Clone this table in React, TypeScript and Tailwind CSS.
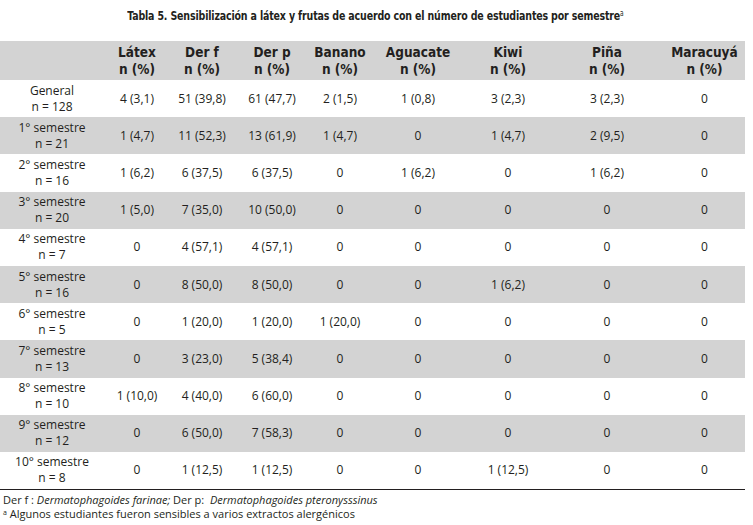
const rows = [
  { label: "General", n: "n = 128", vals: ["4 (3,1)", "51 (39,8)", "61 (47,7)", "2 (1,5)", "1 (0,8)", "3 (2,3)", "3 (2,3)", "0"] },
  { label: "1° semestre", n: "n = 21", vals: ["1 (4,7)", "11 (52,3)", "13 (61,9)", "1 (4,7)", "0", "1 (4,7)", "2 (9,5)", "0"] },
  { label: "2° semestre", n: "n = 16", vals: ["1 (6,2)", "6 (37,5)", "6 (37,5)", "0", "1 (6,2)", "0", "1 (6,2)", "0"] },
  { label: "3° semestre", n: "n = 20", vals: ["1 (5,0)", "7 (35,0)", "10 (50,0)", "0", "0", "0", "0", "0"] },
  { label: "4° semestre", n: "n = 7", vals: ["0", "4 (57,1)", "4 (57,1)", "0", "0", "0", "0", "0"] },
  { label: "5° semestre", n: "n = 16", vals: ["0", "8 (50,0)", "8 (50,0)", "0", "0", "1 (6,2)", "0", "0"] },
  { label: "6° semestre", n: "n = 5", vals: ["0", "1 (20,0)", "1 (20,0)", "1 (20,0)", "0", "0", "0", "0"] },
  { label: "7° semestre", n: "n = 13", vals: ["0", "3 (23,0)", "5 (38,4)", "0", "0", "0", "0", "0"] },
  { label: "8° semestre", n: "n = 10", vals: ["1 (10,0)", "4 (40,0)", "6 (60,0)", "0", "0", "0", "0", "0"] },
  { label: "9° semestre", n: "n = 12", vals: ["0", "6 (50,0)", "7 (58,3)", "0", "0", "0", "0", "0"] },
  { label: "10° semestre", n: "n = 8", vals: ["0", "1 (12,5)", "1 (12,5)", "0", "0", "1 (12,5)", "0", "0"] },
];

const headers = ["Látex", "Der f", "Der p", "Banano", "Aguacate", "Kiwi", "Piña", "Maracuyá"];
const widths = [104, 66, 64, 76, 60, 96, 84, 114, 81];

// no narrow font installed, DejaVu condensed face is the closest
const condensed = { fontFamily: '"DejaVu Sans Condensed", "DejaVu Sans", sans-serif', fontStretch: "condensed" };

export default function App() {
  return (
    <div className="w-[753px] h-[525px] bg-white text-[#231f20] font-['Open_Sans',sans-serif] overflow-hidden">
      <div className="h-[41px] pt-[7px] w-[750px] flex justify-center">
        <div
          className="text-[13px] font-bold leading-[18px] whitespace-nowrap scale-x-[0.81] origin-center tracking-[-0.2px]"
          style={condensed}
        >
          Tabla 5. Sensibilización a látex y frutas de acuerdo con el número de estudiantes por semestre
          <sup className="text-[8px] font-normal">a</sup>
        </div>
      </div>
      <table className="w-[745px] table-fixed border-collapse">
        <colgroup>
          {widths.map((w, i) => (
            <col key={i} style={{ width: w }} />
          ))}
        </colgroup>
        <thead>
          <tr className="h-[39px] bg-[#d3d3d3]">
            <th />
            {headers.map((h) => (
              <th
                key={h}
                className="text-[13.5px] font-bold leading-[17px] text-center align-middle"
                style={condensed}
              >
                <div>{h}</div>
                <div>n (%)</div>
              </th>
            ))}
          </tr>
        </thead>
        <tbody>
          {rows.map((r, i) => (
            <tr key={r.label} className={`h-[37.2px] ${i % 2 === 1 ? "bg-[#d3d3d3]" : "bg-white"}`}>
              <td className="text-center text-[12px] leading-[16px] align-middle">
                <div>{r.label}</div>
                <div>{r.n}</div>
              </td>
              {r.vals.map((v, j) => (
                <td key={j} className="text-center text-[12px] align-middle whitespace-nowrap">
                  {v}
                </td>
              ))}
            </tr>
          ))}
        </tbody>
      </table>
      <div className="w-[745px] border-t border-[#231f20]" />
      <div className="pl-[3px] pt-[3px] text-[11px] leading-[14px]">
        <div>
          Der f : <i>Dermatophagoides farinae;</i> Der p:&nbsp; <i>Dermatophagoides pteronysssinus</i>
        </div>
        <div>
          <sup className="text-[7px]">a</sup> Algunos estudiantes fueron sensibles a varios extractos alergénicos
        </div>
      </div>
    </div>
  );
}
